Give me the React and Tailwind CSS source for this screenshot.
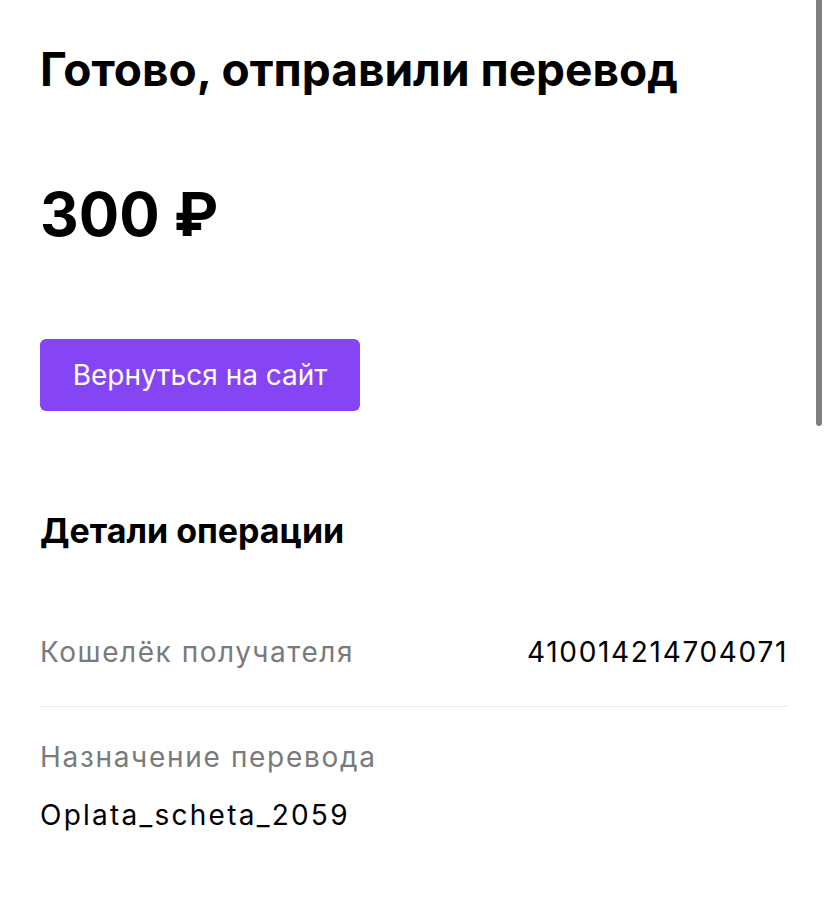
export default function App() {
  return (
    <div className="relative min-h-[904px] w-full bg-white" style={{ fontFamily: "Inter, 'Noto Sans', sans-serif" }}>
      <div className="absolute right-[6px] top-0 h-[426px] w-[6px] rounded-b-full bg-[#808080]" />
      <div className="px-10 pt-[41px]">
        <h1 className="text-[46px] font-bold leading-[56px] text-black">Готово, отправили перевод</h1>
        <div className="mt-[81px] text-[60px] font-bold leading-[72px] text-black">300 ₽</div>
        <button className="mt-[89px] flex h-[72px] w-[320px] items-center justify-center rounded-[6px] bg-[#8645f5] text-[28px] font-normal text-white">
          Вернуться на сайт
        </button>
        <h2 className="mt-[100px] text-[34px] font-bold leading-[40px] text-black">Детали операции</h2>
        <div className="mt-[81px] flex items-center justify-between border-b border-[#e8e8e8] pb-[34px]">
          <span className="text-[28px] leading-[40px] tracking-[0.055em] text-[#7a7a7a]">Кошелёк получателя</span>
          <span className="text-[28px] leading-[40px] tracking-[0.06em] text-black">410014214704071</span>
        </div>
        <div className="pt-[30px]">
          <div className="text-[28px] leading-[40px] tracking-[0.06em] text-[#7a7a7a]">Назначение перевода</div>
          <div className="mt-[18px] text-[28px] leading-[40px] tracking-[0.08em] text-black">Oplata_scheta_2059</div>
        </div>
      </div>
    </div>
  );
}
